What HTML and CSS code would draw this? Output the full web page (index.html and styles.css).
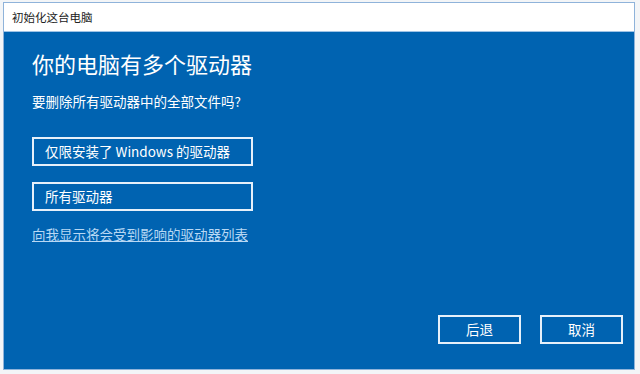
FILE: index.html
```html
<!DOCTYPE html>
<html lang="zh-CN">
<head>
<meta charset="utf-8">
<title>初始化这台电脑</title>
<link rel="stylesheet" href="styles.css">
</head>
<body>
<div class="window">
  <div class="titlebar">初始化这台电脑</div>
  <div class="content">
    <h1 class="heading">你的电脑有多个驱动器</h1>
    <p class="question">要删除所有驱动器中的全部文件吗?</p>
    <div class="options">
      <button class="option">仅限安装了 Windows 的驱动器</button>
      <button class="option">所有驱动器</button>
    </div>
    <a class="link" href="#">向我显示将会受到影响的驱动器列表</a>
    <div class="footer">
      <button class="action">后退</button>
      <button class="action">取消</button>
    </div>
  </div>
</div>
</body>
</html>
```

FILE: styles.css
```css
html, body {
  margin: 0;
  padding: 0;
  background: #f3f5f7;
  font-family: "Noto Sans CJK SC", "Noto Sans", sans-serif;
}
body {
  padding: 2px 0 0 3px;
}
.window {
  box-sizing: border-box;
  width: 632px;
  height: 368px;
  border: 1px solid #8fb3da;
  display: flex;
  flex-direction: column;
  background: #0063b1;
}
.titlebar {
  height: 28px;
  flex: none;
  background: #ffffff;
  border-bottom: 1px solid #9ec3e6;
  color: #222;
  font-size: 11.5px;
  line-height: 28px;
  padding-left: 8px;
}
.content {
  flex: 1;
  display: flex;
  flex-direction: column;
  padding: 15px 11px 25px 28px;
  color: #ffffff;
}
.heading {
  margin: 0;
  font-size: 22px;
  font-weight: normal;
  line-height: 32px;
}
.question {
  margin: 12px 0 0;
  font-size: 13.5px;
  line-height: 20px;
}
.options {
  display: flex;
  flex-direction: column;
  gap: 16px;
  margin-top: 26px;
}
.option {
  box-sizing: border-box;
  width: 221px;
  height: 29px;
  border: 2px solid #e6f0fa;
  background: transparent;
  color: #fff;
  font-family: inherit;
  font-size: 13.5px;
  text-align: left;
  padding: 0 0 1px 11px;
}
.link {
  margin-top: 13px;
  color: #b8d8f4;
  font-size: 13.5px;
  line-height: 20px;
  text-decoration: underline;
  align-self: flex-start;
}
.footer {
  margin-top: auto;
  display: flex;
  justify-content: flex-end;
  gap: 19px;
}
.action {
  box-sizing: border-box;
  width: 83px;
  height: 29px;
  border: 2px solid #e6f0fa;
  background: transparent;
  color: #fff;
  font-family: inherit;
  font-size: 13.5px;
  padding: 0 0 1px;
}
```
